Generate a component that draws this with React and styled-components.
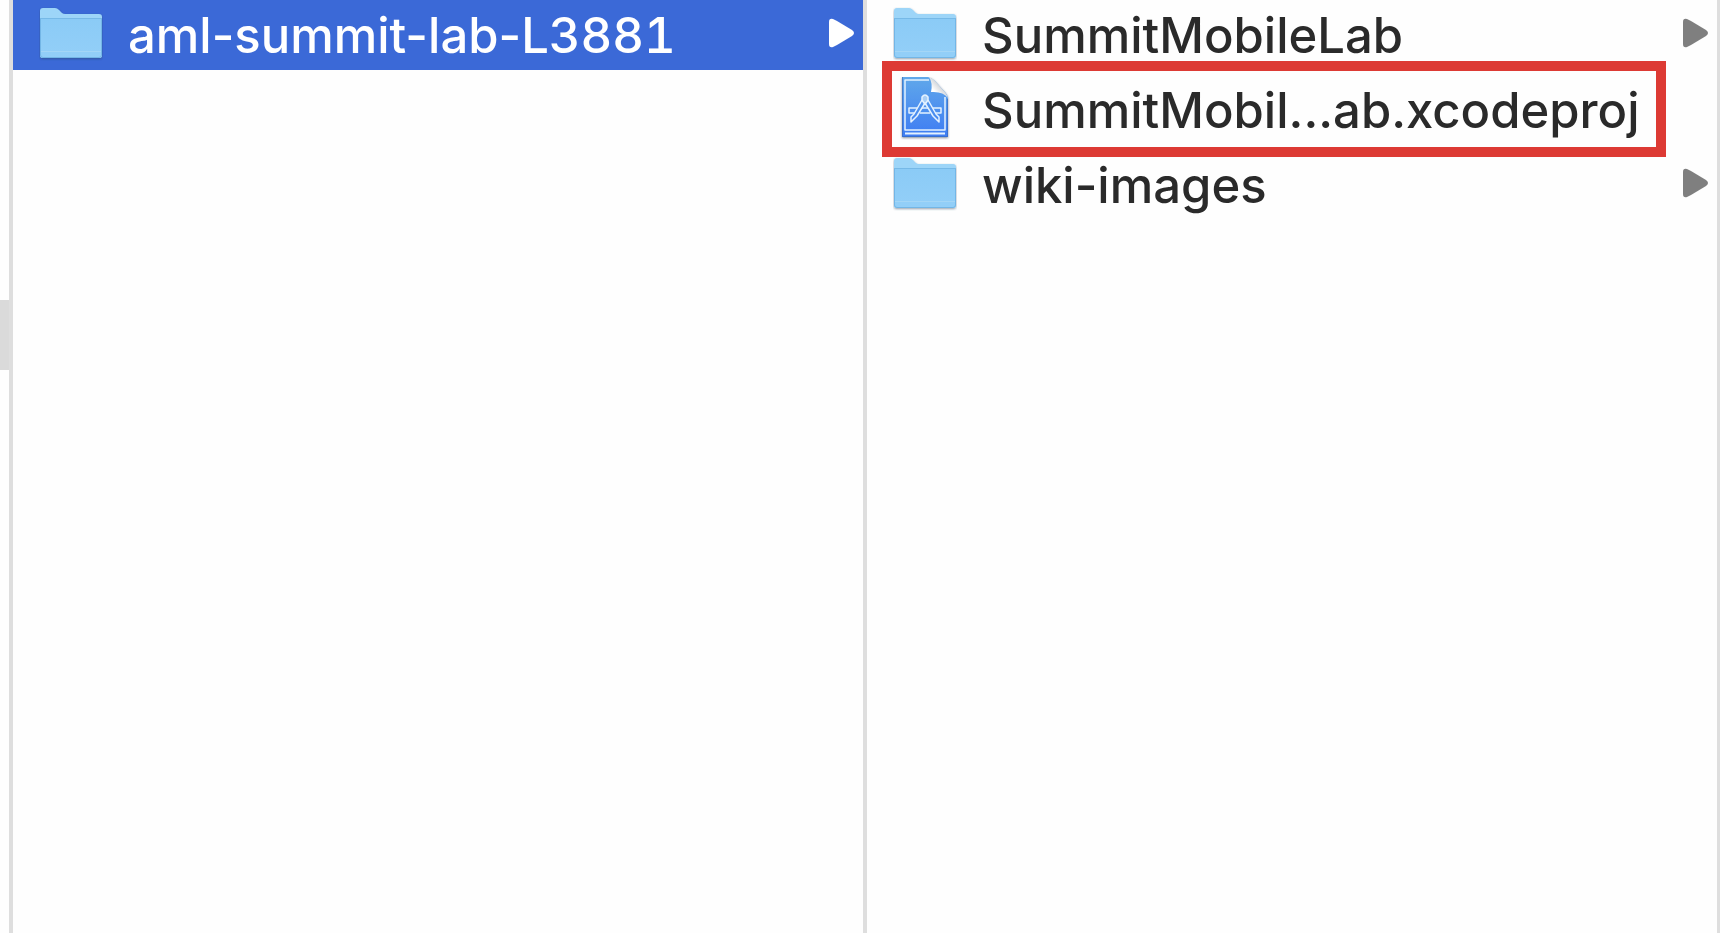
import React from "react";
import styled, { createGlobalStyle } from "styled-components";

const GlobalStyle = createGlobalStyle`
  *, *::before, *::after { box-sizing: border-box; }
  body { margin: 0; background: #fefefe; }
`;

const Browser = styled.main`
  display: grid;
  grid-template-columns: 9px 1fr 1fr 3px;
  min-height: 100vh;
  overflow: hidden;
  font-family: Inter, "Liberation Sans", sans-serif;
  color: #2a2a2a;
`;

const ParentColumn = styled.div`
  padding-top: 300px;
`;

const ParentSelection = styled.div`
  height: 70px;
  background: #dadada;
`;

const Column = styled.ul`
  display: flex;
  flex-direction: column;
  gap: 5px;
  min-width: 0;
  margin: 0;
  padding: 0;
  list-style: none;
  border-left: 4px solid #dedede;
`;

const ColumnEdge = styled.div`
  background: #dedede;
`;

const Item = styled.li`
  position: relative;
`;

const Row = styled.button`
  display: flex;
  align-items: center;
  width: 100%;
  height: 70px;
  padding: 0 8px 0 26px;
  border: 0;
  background: ${(p) => (p.$selected ? "#3b69d7" : "transparent")};
  color: ${(p) => (p.$selected ? "#fff" : "inherit")};
  font: inherit;
  text-align: left;
  cursor: default;
`;

const IconBox = styled.span`
  flex: none;
  width: 64px;
  height: 66px;
  margin-right: 25px;

  svg { display: block; }
`;

const Name = styled.span`
  flex: 1;
  min-width: 0;
  padding-top: 2px;
  font-size: 49px;
  font-weight: 500;
  line-height: 70px;
  white-space: nowrap;
`;

const Digits = styled.span`
  font-variant-numeric: tabular-nums;
`;

const Arrow = styled.svg`
  flex: none;
  margin-bottom: 4px;
  fill: ${(p) => (p.$selected ? "#fff" : "#7f7f7f")};
`;

const Highlight = styled.span`
  position: absolute;
  inset: -14px 51px -12px 15px;
  border: 10px solid #dd3a34;
  pointer-events: none;
`;

const FolderIcon = () => (
  <svg width="64" height="66" viewBox="0 0 64 66" aria-hidden="true">
    <defs>
      <linearGradient id="folderFront" x1="0" y1="0" x2="0" y2="1">
        <stop offset="0" stopColor="#8bcbf6" />
        <stop offset="1" stopColor="#93cff8" />
      </linearGradient>
      <filter id="folderShadow" x="-10%" y="-10%" width="120%" height="125%">
        <feDropShadow dx="0" dy="1" stdDeviation="1" floodColor="#27435c" floodOpacity="0.5" />
      </filter>
    </defs>
    <g filter="url(#folderShadow)">
      <path d="M1 9Q1 6 4 6H16Q18 6 20 8L23 11Q24 12 26 12H60Q63 12 63 15V53Q63 56 60 56H4Q1 56 1 53Z" fill="#9dd5f8" />
      <path d="M1 17H63V53Q63 56 60 56H4Q1 56 1 53Z" fill="url(#folderFront)" />
    </g>
    <path d="M1 16.5H63" stroke="#76b9e7" />
    <path d="M1 49.5H63" stroke="#a4d6f6" />
    <path d="M1.5 17V53Q1.5 55.5 4 55.5H60Q62.5 55.5 62.5 53V17" fill="none" stroke="#73b6e6" />
  </svg>
);

const ProjectIcon = () => (
  <svg width="64" height="66" viewBox="0 0 64 66" aria-hidden="true">
    <defs>
      <linearGradient id="projectPage" x1="0" y1="0" x2="0" y2="1">
        <stop offset="0" stopColor="#60a8ea" />
        <stop offset="1" stopColor="#3e7cf3" />
      </linearGradient>
      <linearGradient id="projectFold" x1="0" y1="1" x2="1" y2="0">
        <stop offset="0.3" stopColor="#ffffff" />
        <stop offset="0.6" stopColor="#d0d3d7" />
      </linearGradient>
      <filter id="projectShadow" x="-10%" y="-10%" width="120%" height="125%">
        <feDropShadow dx="0" dy="1" stdDeviation="1" floodColor="#1d2d48" floodOpacity="0.55" />
      </filter>
    </defs>
    <g filter="url(#projectShadow)">
      <path d="M9 0H35Q39 1 42 4L51 14Q55 18 55 22V60H9Z" fill="url(#projectPage)" />
      <path d="M36 0Q39 1 42 4L51 14Q54 17 55 21Q50 14 38 15Q40 6 36 0Z" fill="url(#projectFold)" />
    </g>
    <path d="M9.5 0V59.5H54.5V22" fill="none" stroke="#3565b4" opacity="0.6" />
    <g fill="none" stroke="#e4f2ff" strokeWidth="1.5" strokeLinejoin="round">
      <path d="M36 3H12V53H52V20" />
      <path d="M12 56.5H52" strokeWidth="2" />
      <path d="M24 31H16V36H22M29 31H35M27 36H37M40 31H48V36H42" />
      <path d="M29 23L21 37L18 40V45L24 39L32 26L40 39L46 45V40L43 37L35 23" />
      <path d="M29 23V20Q32 16 35 20V23L33 26H31Z" fill="#a9cef5" />
    </g>
  </svg>
);

const Entry = ({ name, kind = "folder", selected = false, highlighted = false }) => (
  <Item>
    <Row type="button" $selected={selected} aria-pressed={selected}>
      <IconBox>{kind === "folder" ? <FolderIcon /> : <ProjectIcon />}</IconBox>
      <Name>
        {name
          .split(/(\d+)/)
          .filter(Boolean)
          .map((part, i) => (/^\d/.test(part) ? <Digits key={i}>{part}</Digits> : part))}
      </Name>
      {kind === "folder" && (
        <Arrow $selected={selected} width="26" height="30" viewBox="0 0 26 30" aria-hidden="true">
          <path d="M0 4Q0 0 4 1Q6 2 8 3L23 12Q27 15 23 18L8 27Q6 28 4 29Q0 30 0 26Z" />
        </Arrow>
      )}
    </Row>
    {highlighted && <Highlight />}
  </Item>
);

export default function App() {
  return (
    <>
      <GlobalStyle />
      <Browser>
        <ParentColumn>
          <ParentSelection />
        </ParentColumn>
        <Column>
          <Entry name="aml-summit-lab-L3881" selected />
        </Column>
        <Column>
          <Entry name="SummitMobileLab" />
          <Entry name="SummitMobil...ab.xcodeproj" kind="project" highlighted />
          <Entry name="wiki-images" />
        </Column>
        <ColumnEdge />
      </Browser>
    </>
  );
}
